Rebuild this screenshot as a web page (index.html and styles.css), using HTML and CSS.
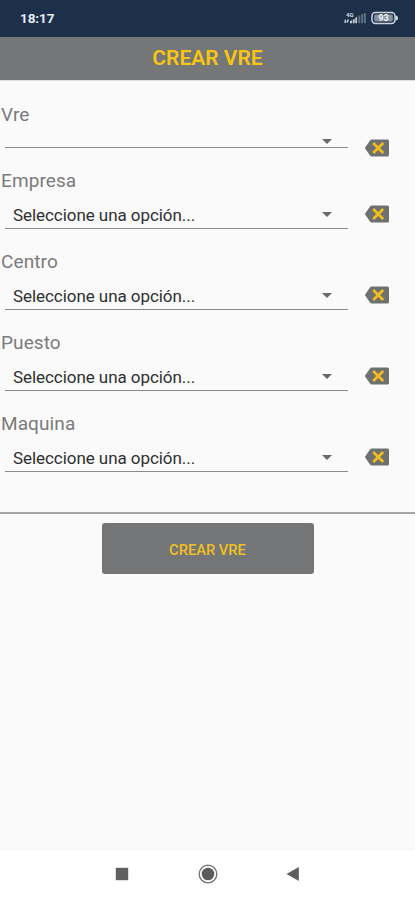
FILE: index.html
```html
<!DOCTYPE html>
<html lang="es">
<head>
<meta charset="utf-8">
<title>Crear VRE</title>
<link rel="stylesheet" href="styles.css">
</head>
<body>
<svg class="defs" width="0" height="0" aria-hidden="true">
  <symbol id="clear" viewBox="0 0 26 18">
    <path fill="#6e7172" d="M8 .5h15.500q1.500 0 1.500 1.500v14q0 1.500-1.500 1.500H8q-1.200 0-2-1L.8 9 6 1.500q.8-1 2-1z"/>
    <path fill="none" stroke="#f2bd1d" stroke-width="2.700" d="M9.200 4l10 10M19.200 4l-10 10"/>
  </symbol>
</svg>
<div class="screen">
  <div class="status">
    <span class="time">18:17</span>
    <svg class="signal" width="23" height="14" viewBox="0 0 23 14">
      <text class="network" x="2" y="5.500">4G</text>
      <path fill="#c3ced7" d="M.5 12V9.500L2 8v4zM2.800 9.500L4.500 7.500V11L2.800 12zM6 12.300v-2l2-1v3zM8.700 12.300V9l2-1.500v4.800zM11.300 12.300V7l1.800-1.500v6.800z"/>
      <path fill="#627588" d="M14.500 4.500h1.800v7.800h-1.800zM17.300 3h1.800v9.300h-1.800zM20 2h1.800v10.300H20z"/>
    </svg>
    <svg class="battery" width="28" height="14" viewBox="0 0 28 14">
      <rect x="1" y="1.500" width="23" height="11" rx="3.500" fill="none" stroke="#cbd5dc" stroke-width="1.500"/>
      <rect x="3.200" y="3.500" width="18.600" height="7" rx="1.500" fill="#8493a1"/>
      <path fill="#cbd5dc" d="M24.500 4.500q2.500 0 2.500 2.500t-2.500 2.500z"/>
      <text class="level" x="12.500" y="10.200">93</text>
    </svg>
  </div>
  <header class="title">CREAR VRE</header>
  <main class="form">
    <section class="field short">
      <label>Vre</label>
      <div class="row"><div class="select"><span></span><i class="arrow"></i></div><svg class="clear"><use href="#clear"/></svg></div>
    </section>
    <section class="field">
      <label>Empresa</label>
      <div class="row"><div class="select"><span>Seleccione una opción...</span><i class="arrow"></i></div><svg class="clear"><use href="#clear"/></svg></div>
    </section>
    <section class="field">
      <label>Centro</label>
      <div class="row"><div class="select"><span>Seleccione una opción...</span><i class="arrow"></i></div><svg class="clear"><use href="#clear"/></svg></div>
    </section>
    <section class="field">
      <label>Puesto</label>
      <div class="row"><div class="select"><span>Seleccione una opción...</span><i class="arrow"></i></div><svg class="clear"><use href="#clear"/></svg></div>
    </section>
    <section class="field">
      <label>Maquina</label>
      <div class="row"><div class="select"><span>Seleccione una opción...</span><i class="arrow"></i></div><svg class="clear"><use href="#clear"/></svg></div>
    </section>
  </main>
  <div class="actions"><button class="submit">CREAR VRE</button></div>
  <nav class="nav">
    <svg width="20" height="20" viewBox="0 0 20 20"><path fill="#5f5f5f" d="M3.800 3.800h12.400v12.400H3.800z"/></svg>
    <svg width="20" height="20" viewBox="0 0 20 20"><circle cx="10" cy="10" r="8.800" fill="none" stroke="#707070" stroke-width="1.300"/><circle cx="10" cy="10" r="6.300" fill="#5c5c5c"/></svg>
    <svg width="20" height="20" viewBox="0 0 20 20"><path fill="#5f5f5f" d="M2.500 10L14.800 3v14z"/></svg>
  </nav>
</div>
</body>
</html>
```

FILE: styles.css
```css
* { box-sizing: border-box; }
body { margin: 0; font-family: Roboto, sans-serif; }
.defs { display: none; }
.screen { display: flex; flex-direction: column; width: 415px; height: 900px; background: #fafafa; overflow: hidden; }
.status { display: flex; align-items: center; flex: 0 0 37px; padding: 0 16px 2px 20px; background: #1d304a; }
.time { margin-right: auto; color: #e8edf3; font-size: 13.500px; font-weight: 700; line-height: 16px; letter-spacing: -.1px; }
.signal { margin-right: 4px; }
.network { font-size: 6px; font-weight: 700; fill: #d5dde4; }
.level { font-size: 9px; font-weight: 700; fill: #f0f4f7; text-anchor: middle; }
.title { flex: 0 0 43px; border-bottom: 1px solid #dedfdf; background: #747677; color: #f9c512; font-size: 21px; font-weight: 600; line-height: 43px; text-align: center; }
.form { flex: 0 0 434px; padding-top: 20px; border-bottom: 2px solid #a6a6a6; }
.field { display: flex; flex-direction: column; height: 81px; }
.field label { height: 27px; padding-left: 1px; color: #7b7b7b; font-size: 19px; line-height: 27px; letter-spacing: .1px; }
.row { display: flex; align-items: flex-start; gap: 16px; padding-left: 5px; }
.select { display: flex; align-items: center; justify-content: space-between; width: 343px; height: 35px; padding: 7px 16px 0 8px; border-bottom: 1px solid #898989; color: #303030; font-size: 17px; line-height: 26px; letter-spacing: -.06px; }
.arrow { width: 10px; height: 5px; background: #696969; clip-path: polygon(0 0, 100% 0, 50% 100%); }
.clear { width: 26px; height: 18px; margin-top: 11px; }
.short { height: 66px; }
.short .select { height: 20px; padding-top: 8px; }
.actions { display: flex; justify-content: center; flex: 1; padding-top: 9px; }
.form { margin-top: -1px; }
.form .field:first-child { margin-top: 1px; }
.submit { width: 212px; height: 51px; padding: 2px 0 0; border: 0; border-radius: 3px; background: #737576; color: #f2c01e; font-family: inherit; font-size: 14.700px; font-weight: 500; }
.nav { display: flex; align-items: center; justify-content: center; gap: 66px; flex: 0 0 49px; padding-bottom: 3px; background: #fff; }
```
